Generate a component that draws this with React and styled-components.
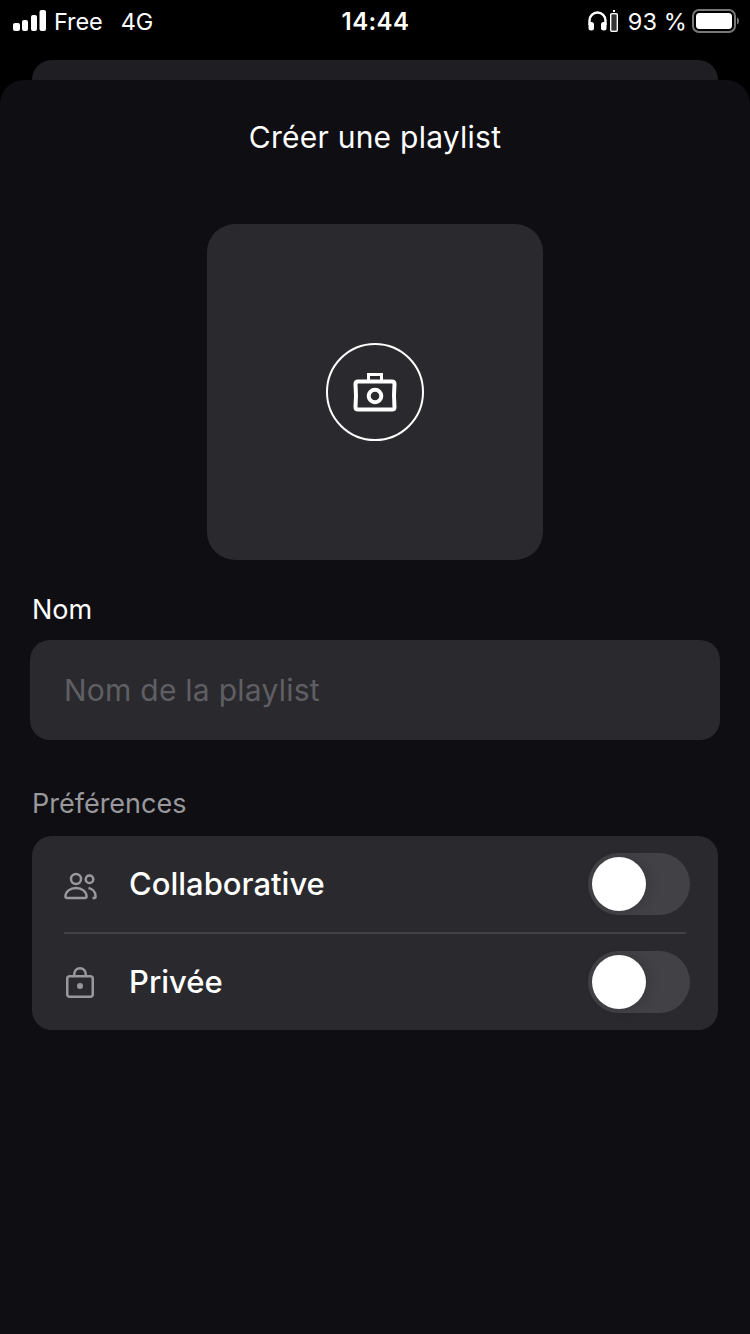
import React from 'react';
import styled, { createGlobalStyle } from 'styled-components';

const GlobalStyle = createGlobalStyle`
  html, body {
    margin: 0;
    padding: 0;
    background: #000;
  }

  * {
    box-sizing: border-box;
  }
`;

const Page = styled.div`
  width: 750px;
  height: 1334px;
  display: flex;
  flex-direction: column;
  overflow: hidden;
  background: #000;
  color: #fff;
  font-family: Inter, "Noto Sans", sans-serif;
`;

const StatusBar = styled.div`
  height: 60px;
  flex-shrink: 0;
  padding: 0 11px 18px 13px;
  display: grid;
  grid-template-columns: 1fr auto 1fr;
  align-items: center;
`;

const StatusLeft = styled.div`
  display: flex;
  align-items: center;
`;

const StatusRight = styled.div`
  display: flex;
  align-items: center;
  justify-content: flex-end;
`;

const Carrier = styled.span`
  margin-left: ${({ $gap }) => $gap}px;
  font-size: 23.5px;
  letter-spacing: -0.1px;
`;

const Time = styled.span`
  margin-left: -1px;
  font-weight: 600;
  font-size: 24px;
  letter-spacing: 0.4px;
`;

const ChargeSlot = styled.span`
  display: flex;
  margin-left: 3px;
`;

const Percent = styled.span`
  margin: 0 5px 0 10px;
  font-size: 23.5px;
  letter-spacing: 0.1px;
`;

const PeekCard = styled.div`
  height: 20px;
  flex-shrink: 0;
  margin: 0 32px;
  background: #1f1f23;
  border-radius: 20px 20px 0 0;
`;

const Sheet = styled.div`
  flex: 1;
  padding: 0 32px;
  display: flex;
  flex-direction: column;
  background: #0f0e13;
  border-radius: 24px 24px 0 0;
`;

const Title = styled.h1`
  margin: 0;
  height: 114px;
  padding-top: 39px;
  font-size: 30px;
  line-height: 36px;
  font-weight: 400;
  letter-spacing: 0.25px;
  text-align: center;
`;

const Cover = styled.div`
  width: 336px;
  height: 336px;
  margin: 30px auto 0;
  display: flex;
  align-items: center;
  justify-content: center;
  background: #2a2a2e;
  border-radius: 28px;
`;

const CameraCircle = styled.div`
  width: 98px;
  height: 98px;
  display: flex;
  align-items: center;
  justify-content: center;
  border: 2px solid #fff;
  border-radius: 50%;
`;

const Label = styled.div`
  margin-top: ${({ $top }) => $top}px;
  font-size: 27px;
  line-height: 34px;
  color: ${({ $muted }) => ($muted ? '#98989d' : '#fff')};
`;

const NameInput = styled.input`
  width: 690px;
  height: 100px;
  margin: 13px 0 0 -2px;
  padding: 0 34px;
  flex-shrink: 0;
  border: 0;
  outline: 0;
  background: #2a2a2e;
  border-radius: 20px;
  color: #fff;
  font-family: inherit;
  font-size: 30px;
  letter-spacing: 0.25px;

  &::placeholder {
    color: #5f5f63;
    opacity: 1;
  }
`;

const PrefCard = styled.div`
  height: 194px;
  margin-top: 15px;
  padding: 0 28px 0 32px;
  display: flex;
  flex-direction: column;
  background: #2a2a2e;
  border-radius: 20px;
`;

const PrefRow = styled.div`
  flex: 1;
  display: flex;
  align-items: center;
`;

const Divider = styled.div`
  height: 2px;
  flex-shrink: 0;
  margin-right: 4px;
  background: #414146;
`;

const PrefIcon = styled.div`
  width: 65px;
  flex-shrink: 0;
  display: flex;
`;

const PrefLabel = styled.span`
  flex: 1;
  margin-top: -2px;
  font-size: 31px;
  font-weight: 500;
`;

const Toggle = styled.div`
  width: 102px;
  height: 62px;
  padding: 4px;
  flex-shrink: 0;
  background: #414146;
  border-radius: 31px;
`;

const Knob = styled.div`
  width: 54px;
  height: 54px;
  background: #fff;
  border-radius: 50%;
  box-shadow: 4px 0 12px rgba(0, 0, 0, 0.12);
`;

const SignalIcon = () => (
  <svg width="33" height="22" viewBox="0 0 33 22" fill="#fff">
    <rect x="0" y="13" width="7" height="8" rx="2" />
    <rect x="9" y="10" width="6" height="11" rx="2" />
    <rect x="18" y="5" width="6" height="16" rx="2" />
    <rect x="26.5" y="0" width="6.5" height="21" rx="2" />
  </svg>
);

const HeadphonesIcon = () => (
  <svg width="19" height="20" viewBox="0 0 19 20" fill="none">
    <path d="M1.500 14V9.500a8 8 0 0 1 16 0V14" stroke="#fff" strokeWidth="2.400" />
    <rect x="0.500" y="11" width="5.500" height="8.500" rx="2.500" fill="#fff" />
    <rect x="13" y="11" width="5.500" height="8.500" rx="2.500" fill="#fff" />
  </svg>
);

const ChargeIcon = () => (
  <svg width="8" height="22" viewBox="0 0 8 22" fill="none">
    <rect x="3" y="0" width="2" height="2" fill="#fff" />
    <rect x="0.750" y="3.750" width="6.500" height="17.500" rx="1" stroke="#fff" strokeWidth="1.500" />
    <rect x="2" y="5" width="4" height="15" fill="#fff" fillOpacity="0.2" />
  </svg>
);

const BatteryIcon = () => (
  <svg width="47" height="24" viewBox="0 0 47 24" fill="none">
    <rect x="1" y="1" width="42" height="22" rx="6" stroke="#77777a" strokeWidth="2" />
    <rect x="4" y="4" width="36" height="16" rx="3.500" fill="#fff" />
    <path d="M45 8.500c1.200.4 2 1.900 2 3.500s-.8 3.100-2 3.500z" fill="#77777a" />
  </svg>
);

const CameraIcon = () => (
  <svg width="48" height="48" viewBox="0 0 48 48" fill="none" stroke="#fff" strokeWidth="4">
    <path d="M7 13.500h34q2.500 0 2.500 2.500Q42.500 27.500 43.500 39q0 2.500-2.500 2.500H7q-2.500 0-2.500-2.500Q5.500 27.500 4.500 16q0-2.500 2.500-2.500z" strokeLinejoin="round" />
    <path d="M17.500 13.500v-7h13v7" strokeWidth="3" />
    <circle cx="24" cy="28" r="6.300" />
  </svg>
);

const PeopleIcon = () => (
  <svg width="33" height="34" viewBox="0 0 33 34" fill="none" stroke="#98989d" strokeWidth="2.500">
    <circle cx="12" cy="12" r="5" />
    <circle cx="25.500" cy="12.300" r="3.800" />
    <path d="M3 31h18c1 0 1.500-.5 1.500-1.500 0-5-4.500-8.500-10.500-8.500S1.500 24.500 1.500 29.500c0 1 .5 1.500 1.500 1.500z" />
    <path d="M24.500 21c4 .8 7 3.800 7 8v1c0 .7-.4 1-1 1h-2" />
  </svg>
);

const LockIcon = () => (
  <svg width="31" height="34" viewBox="0 0 31 34" fill="none" stroke="#98989d" strokeWidth="2.500">
    <rect x="3.250" y="11.250" width="25.500" height="20.500" rx="2.500" />
    <path d="M10.250 11.250V9a5.750 5.750 0 0 1 11.500 0v2.250" />
    <circle cx="16" cy="21" r="3" fill="#98989d" stroke="none" />
  </svg>
);

const prefs = [
  { id: 'collab', label: 'Collaborative', icon: <PeopleIcon /> },
  { id: 'private', label: 'Privée', icon: <LockIcon /> },
];

const App = () => (
  <Page>
    <GlobalStyle />
    <StatusBar>
      <StatusLeft>
        <SignalIcon />
        <Carrier $gap={8}>Free</Carrier>
        <Carrier $gap={18}>4G</Carrier>
      </StatusLeft>
      <Time>14:44</Time>
      <StatusRight>
        <HeadphonesIcon />
        <ChargeSlot>
          <ChargeIcon />
        </ChargeSlot>
        <Percent>93 %</Percent>
        <BatteryIcon />
      </StatusRight>
    </StatusBar>
    <PeekCard />
    <Sheet>
      <Title>Créer une playlist</Title>
      <Cover>
        <CameraCircle>
          <CameraIcon />
        </CameraCircle>
      </Cover>
      <Label $top={33}>Nom</Label>
      <NameInput placeholder="Nom de la playlist" readOnly />
      <Label $top={47} $muted>Préférences</Label>
      <PrefCard>
        {prefs.map(({ id, label, icon }, index) => (
          <React.Fragment key={id}>
            {index > 0 && <Divider />}
            <PrefRow>
              <PrefIcon>{icon}</PrefIcon>
              <PrefLabel>{label}</PrefLabel>
              <Toggle>
                <Knob />
              </Toggle>
            </PrefRow>
          </React.Fragment>
        ))}
      </PrefCard>
    </Sheet>
  </Page>
);

export default App;
